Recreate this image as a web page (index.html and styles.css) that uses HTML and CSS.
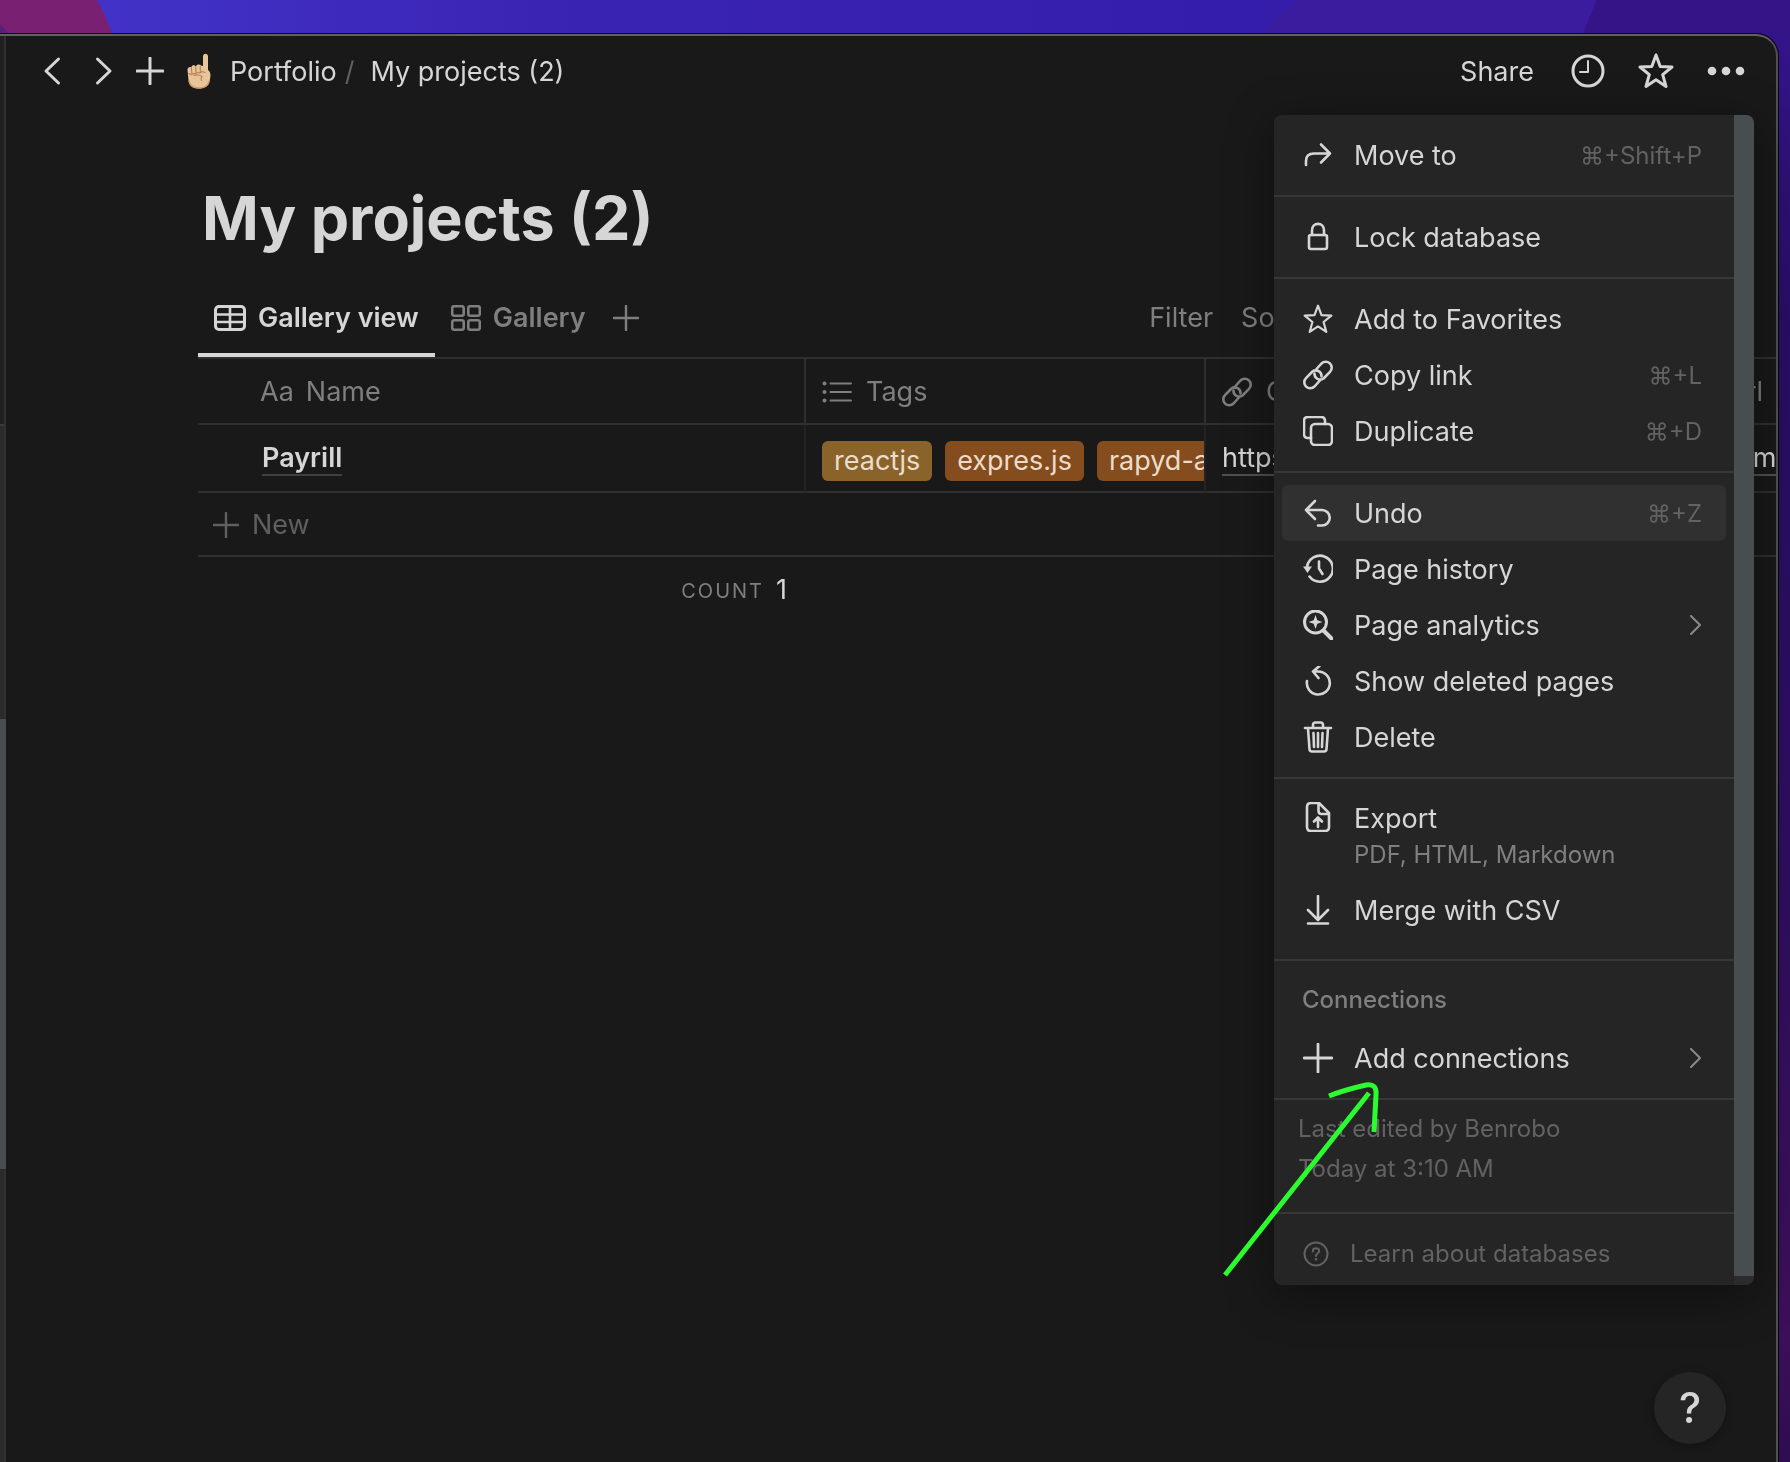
FILE: index.html
```html
<!DOCTYPE html>
<html lang="en">
<head>
<meta charset="utf-8">
<meta name="viewport" content="width=device-width, initial-scale=1">
<title>My projects (2)</title>
<link rel="stylesheet" href="styles.css">
</head>
<body>
<svg class="wallpaper" viewBox="0 0 1790 1462" preserveAspectRatio="none" aria-hidden="true">
  <defs>
    <linearGradient id="sky" x1="0" y1="0" x2="1" y2="0"><stop offset="0.05" stop-color="#4233c8"/><stop offset="0.3" stop-color="#3a24b4"/><stop offset="0.7" stop-color="#351dab"/><stop offset="1" stop-color="#34148a"/></linearGradient>
    <linearGradient id="side" x1="0" y1="0" x2="0" y2="1"><stop offset="0" stop-color="#34148a"/><stop offset="0.2" stop-color="#260e62"/><stop offset="0.6" stop-color="#2e0e5e"/><stop offset="0.9" stop-color="#3d0f5a"/><stop offset="1" stop-color="#2f0c52"/></linearGradient>
  </defs>
  <rect width="1790" height="40" fill="url(#sky)"/>
  <path d="M1298 0L1260 34H1584L1597 0Z" fill="#3a1c9e"/>
  <path d="M1597 0L1580 40H1790V0Z" fill="#341486"/>
  <path d="M0 0H97Q107 18 112 34H0Z" fill="#7a2072"/>
  <path d="M0 24L9 34H0Z" fill="#56207a"/>
  <rect x="1760" y="34" width="30" height="1428" fill="url(#side)"/>
</svg>

<svg class="sprite" aria-hidden="true">
  <symbol id="i-plus" viewBox="0 0 28 28"><path d="M14 1V27M1 14H27"/></symbol>
  <symbol id="i-chev" viewBox="0 0 12 20"><path d="M1 1L10 10L1 19"/></symbol>
  <symbol id="i-star" viewBox="0 0 36 36"><path d="M18 2L22.2 13.4L34 14L24.700 21.600L28 33.500L18 26.800L8 33.500L11.300 21.600L2 14L13.800 13.400Z"/></symbol>
  <symbol id="i-link" viewBox="0 0 30 30"><path d="M13.500 9L18.500 3.500A5.900 5.900 0 0 1 27 11.800L20.500 18.500A5.700 5.700 0 0 1 11.500 13.500"/><path d="M16.500 21L11.500 26.500A5.900 5.900 0 0 1 3 18.200L9.500 11.500A5.700 5.700 0 0 1 18.500 16.500"/></symbol>
</svg>

<div class="desktop">
  <div class="window">
    <aside class="sidebar-edge"><div class="sidebar-top"></div><div class="sidebar-thumb"></div></aside>
    <div class="page">
      <header class="topbar">
        <nav class="crumbs" aria-label="Breadcrumb">
          <button class="icon-btn back" aria-label="Back"><svg width="18" height="30" viewBox="0 0 18 30"><path d="M15.500 3L3 15L15.500 27"/></svg></button>
          <button class="icon-btn forward" aria-label="Forward"><svg width="18" height="30" viewBox="0 0 18 30"><path d="M2.500 3L15 15L2.500 27"/></svg></button>
          <button class="icon-btn add" aria-label="New tab"><svg width="28" height="28"><use href="#i-plus"/></svg></button>
          <a class="crumb first" href="#"><svg class="hand" width="26" height="36" viewBox="0 0 26 36" aria-hidden="true"><path d="M17 3.500C17 -.2 22 -.2 22 3.500L22 17C25 19 25 23 23.500 28C22 33.500 18 35.500 13 35.500C6 35.500 3.500 32 2.500 27L1.500 17C1.200 14.500 3.500 13.300 5.300 14.200C6 12 8.500 11.800 9.800 13.200C11 11 14 11 15 12.500L17 13Z" fill="#e9c49b"/><path d="M5.300 14.500L5.800 20M9.800 13.500L10 19M14.300 13V18M3 20.500Q5 22.500 7 20.500Q9 21.500 11 19.500Q14 20.500 16 18.500L19 19.500M8 22.500Q12 21 16 23.500Q14.500 25 15.500 27.500" stroke="#b98658" stroke-width="1.200"/><path d="M3 28C4 33 8 35 13 35C18 35 22 33 23.300 28" stroke="#d19a68" stroke-width="1.400"/></svg><span class="label">Portfolio</span></a>
          <span class="slash label">/</span>
          <a class="crumb" href="#"><span class="label">My projects (2)</span></a>
        </nav>
        <div class="actions">
          <button class="share"><span class="label">Share</span></button>
          <button class="icon-btn" aria-label="Updates"><svg width="34" height="34" viewBox="0 0 34 34"><circle cx="17" cy="17" r="15"/><path d="M17 7V18H9" stroke-width="2"/></svg></button>
          <button class="icon-btn" aria-label="Favorite"><svg width="36" height="36"><use href="#i-star"/></svg></button>
          <button class="icon-btn" aria-label="More"><svg class="solid" width="38" height="10" viewBox="0 0 38 10"><circle cx="5" cy="5" r="4.300"/><circle cx="19" cy="5" r="4.300"/><circle cx="33" cy="5" r="4.300"/></svg></button>
        </div>
      </header>

      <main class="content">
        <h1>My projects (2)</h1>
        <div class="views">
          <button class="tab active"><svg width="32" height="26" viewBox="0 0 32 26"><rect x="1.500" y="1.500" width="29" height="23" rx="3.500" stroke-width="3"/><path d="M2 9.500H30M2 17H30M16 2V24"/></svg>Gallery view</button>
          <button class="tab"><svg width="30" height="26" viewBox="0 0 30 26"><rect x="1.200" y="1.200" width="11.500" height="9.500" rx="2"/><rect x="17.300" y="1.200" width="11.500" height="9.500" rx="2"/><rect x="1.200" y="15.200" width="11.500" height="9.500" rx="2"/><rect x="17.300" y="15.200" width="11.500" height="9.500" rx="2"/></svg>Gallery</button>
          <button class="tab add-view" aria-label="Add view"><svg width="26" height="26"><use href="#i-plus"/></svg></button>
          <div class="tools"><button>Filter</button><button>Sort</button></div>
        </div>
        <table>
          <colgroup><col class="c-name"><col class="c-prop"><col class="c-prop"><col class="c-last"></colgroup>
          <thead><tr>
            <th scope="col"><span class="head name"><span class="aa">Aa</span>Name</span></th>
            <th scope="col"><span class="head"><svg width="30" height="24" viewBox="0 0 30 24"><path d="M8.500 3.500H29M8.500 12H29M8.500 20.500H29" stroke-width="2"/><g class="solid"><circle cx="2.500" cy="3.500" r="2"/><circle cx="2.500" cy="12" r="2"/><circle cx="2.500" cy="20.500" r="2"/></g></svg>Tags</span></th>
            <th scope="col"><span class="head"><svg width="30" height="30"><use href="#i-link"/></svg>Github</span></th>
            <th scope="col"><span class="head"><svg width="30" height="30"><use href="#i-link"/></svg>Live Url</span></th>
          </tr></thead>
          <tbody><tr>
            <td><a class="title-link" href="#">Payrill</a></td>
            <td><div class="tags"><span class="tag yellow">reactjs</span><span class="tag orange">expres.js</span><span class="tag orange">rapyd-api</span></div></td>
            <td><a class="url" href="#">https://github.com</a></td>
            <td><a class="url" href="#">https://teammate.com</a></td>
          </tr></tbody>
        </table>
        <button class="new-row"><svg width="26" height="26"><use href="#i-plus"/></svg>New</button>
        <div class="count"><span class="count-label">COUNT</span><span>1</span></div>
      </main>
    </div>

    <div class="menu">
      <div class="menu-body">
        <div class="group">
          <button class="item"><svg width="30" height="30" viewBox="0 0 30 30"><path d="M3 25V21C3 16 6 13.500 11 13.500H27M18 4.500L27 13.500L18 22.500"/></svg><span>Move to</span><kbd>⌘+Shift+P</kbd></button>
        </div>
        <div class="group">
          <button class="item"><svg width="30" height="30" viewBox="0 0 30 30"><rect x="6" y="13" width="18" height="14" rx="2"/><path d="M9 13V8.500C9 -.3 21 -.3 21 8.500V13"/></svg><span>Lock database</span></button>
        </div>
        <div class="group">
          <button class="item"><svg width="30" height="30"><use href="#i-star"/></svg><span>Add to Favorites</span></button>
          <button class="item"><svg width="30" height="30"><use href="#i-link"/></svg><span>Copy link</span><kbd>⌘+L</kbd></button>
          <button class="item"><svg width="30" height="30" viewBox="0 0 30 30"><rect x="8" y="8" width="21" height="21" rx="4"/><path d="M8 22H5Q1 22 1 18V5Q1 1 5 1H18Q22 1 22 5V8"/></svg><span>Duplicate</span><kbd>⌘+D</kbd></button>
        </div>
        <div class="group">
          <button class="item hover"><svg width="30" height="30" viewBox="0 0 30 30"><path d="M12 3L3 12L12 21M3 12H19A7.500 7.500 0 0 1 19 27.500H15"/></svg><span>Undo</span><kbd>⌘+Z</kbd></button>
          <button class="item"><svg width="30" height="30" viewBox="0 0 30 30"><path d="M4 13A13 13 0 1 1 6.500 22.500M16 7.500V14.500L19.500 20"/><path class="solid" d="M0 12.500H9L4.500 19Z"/></svg><span>Page history</span></button>
          <button class="item"><svg width="30" height="30" viewBox="0 0 30 30"><circle cx="12.500" cy="12" r="11" stroke-width="3"/><path d="M20.500 20.500L28.500 28.500" stroke-width="4"/><path class="solid" d="M12.500 5L14.300 10.200L19.500 12L14.300 13.800L12.500 19L10.700 13.800L5.500 12L10.700 10.200Z"/></svg><span>Page analytics</span><svg class="chev" width="12" height="20"><use href="#i-chev"/></svg></button>
          <button class="item"><svg width="30" height="30" viewBox="0 0 30 30"><path d="M4 15A11.500 11.500 0 1 0 15 5.500H11M16.500 0L10 5.500L15.500 12"/></svg><span>Show deleted pages</span></button>
          <button class="item"><svg width="30" height="32" viewBox="0 0 30 32"><path d="M2 7H28M5 7.500L6.500 28Q6.600 30.500 9 30.500H21Q23.400 30.500 23.500 28L25 7.500M10 6.500V4Q10 1.500 12.500 1.500H17.500Q20 1.500 20 4V6.500M10.500 12L11 26M15 12V26M19.500 12L19 26"/></svg><span>Delete</span></button>
        </div>
        <div class="group files">
          <button class="item tall"><svg width="30" height="30" viewBox="0 0 30 30"><path d="M8 1H16L26 11V25Q26 29 22 29H8Q4 29 4 25V5Q4 1 8 1ZM15.500 1.500V9Q15.500 12 18.500 12H25.500M15 25V16M11 19.500L15 15.500L19 19.500"/></svg><span>Export<small>PDF, HTML, Markdown</small></span></button>
          <button class="item"><svg width="30" height="30" viewBox="0 0 30 30"><path d="M15 1V24M5 15L15 25L25 15M5 28.500H25"/></svg><span>Merge with CSV</span></button>
        </div>
        <div class="group">
          <h2>Connections</h2>
          <button class="item"><svg width="30" height="30"><use href="#i-plus"/></svg><span>Add connections</span><svg class="chev" width="12" height="20"><use href="#i-chev"/></svg></button>
        </div>
        <div class="meta"><p>Last edited by Benrobo</p><p>Today at 3:10 AM</p></div>
        <a class="learn" href="#"><svg width="26" height="26" viewBox="0 0 26 26"><circle cx="13" cy="13" r="11.500" stroke-width="2"/><path d="M9.800 10.500C9.800 6 16.200 6.300 16.200 10C16.200 12.200 13 12.500 13 15" stroke-width="2"/><circle class="solid" cx="13" cy="18.300" r="1.300"/></svg>Learn about databases</a>
      </div>
      <div class="scroll"><div class="scroll-thumb"></div></div>
    </div>

    <svg class="arrow" width="160" height="200" viewBox="0 0 160 200" aria-hidden="true"><path d="M6 195L150 13M110 16Q125 10 147 5Q158 3 157 15L155 52"/></svg>
    <button class="help">?</button>
  </div>
</div>
</body>
</html>
```
FILE: styles.css
```css
* { box-sizing: border-box; }
body {
  margin: 0;
  background: #2b0e5e;
  color: #d6d6d6;
  font: 27px/36px Inter, "Liberation Sans", sans-serif;
}
button, a, kbd, small { font: inherit; color: inherit; }
button { background: none; border: 0; padding: 0; text-align: left; cursor: pointer; }
a { text-decoration: none; }
h1, h2, p { margin: 0; }
svg { flex: none; display: block; fill: none; stroke: currentColor; stroke-width: 2.6px; stroke-linecap: round; stroke-linejoin: round; }
.solid { fill: currentColor; stroke: none; }
.sprite { position: absolute; width: 0; height: 0; }
.wallpaper { position: fixed; inset: 0; width: 100%; height: 100%; stroke: none; }

.desktop { position: relative; display: flex; min-height: 100vh; padding: 34px 12px 0 0; }
.window {
  position: relative;
  flex: 1;
  min-width: 0;
  display: flex;
  background: #191919;
  border-top: 2px solid #626066;
  border-right: 2px solid #505052;
  border-top-right-radius: 22px;
  box-shadow: 0 0 0 1px #050308;
}
.sidebar-edge { width: 6px; flex: none; background: #2b2b2b; border-right: 2px solid #303030; }
.sidebar-top { height: 390px; background: #202020; border-bottom: 2px solid #3a3a3a; }
.sidebar-thumb { width: 6px; height: 450px; margin-top: 293px; background: #484d50; }
.page { flex: 1; min-width: 0; }

.topbar { display: flex; align-items: center; justify-content: space-between; height: 70px; padding: 0 31px 0 37px; }
.crumbs, .actions, .crumb { display: flex; align-items: center; }
.topbar svg { stroke-width: 3px; }
.topbar .hand { stroke: none; }
.label, .item span { padding-top: 2px; }
.share .label { display: block; }
.forward { margin-left: 34px; }
.add { margin-left: 23px; }
.crumb.first { margin-left: 22px; gap: 18px; }
.slash { color: #5f5f5f; margin: 0 16px 0 8px; }
.actions { gap: 33px; }
.share { margin-right: 4px; }

.content { padding: 74px 0 0 192px; }
h1 { font-size: 61px; line-height: 76px; font-weight: 700; padding-left: 4px; }
.views { display: flex; height: 80px; margin-top: 23px; border-bottom: 2px solid #2f2f2f; }
.tab { display: flex; align-items: center; gap: 12px; padding: 4px 16px 0; color: #7f7f7f; font-weight: 600; border-bottom: 4px solid transparent; }
.tab.active { color: #d6d6d6; border-color: #d6d6d6; }
.add-view { padding-left: 11px; }
.tools { display: flex; gap: 28px; margin-left: auto; padding-right: 482px; color: #7f7f7f; }

table { width: 100%; table-layout: fixed; border-spacing: 0; }
.c-name { width: 608px; }
.c-prop { width: 400px; }
th, td { padding: 0 16px; border-right: 2px solid #2f2f2f; border-bottom: 2px solid #2f2f2f; font-weight: 400; text-align: left; overflow: hidden; white-space: nowrap; }
td { border-right-color: #232323; height: 68px; }
th { height: 66px; padding-top: 2px; color: #7f7f7f; }
th:last-child, td:last-child { border-right: 0; }
td:nth-child(2), td:last-child { padding-right: 0; }
.head { display: flex; align-items: center; gap: 14px; }
.head.name { padding-left: 46px; gap: 12px; }
.title-link { margin-left: 48px; font-weight: 600; border-bottom: 2px solid #404040; }
.url { border-bottom: 2px solid #505050; }
.tags { display: flex; gap: 13px; padding-top: 6px; }
.tag { flex: none; padding: 2px 12px; border-radius: 6px; color: #ecdccb; }
.yellow { background: #89632a; }
.orange { background: #854c1d; }
.new-row { display: flex; align-items: center; gap: 13px; width: 100%; height: 64px; padding: 2px 0 0 15px; color: #5f5f5f; border-bottom: 2px solid #2f2f2f; }
.count { display: flex; justify-content: flex-end; align-items: center; gap: 12px; width: 589px; height: 66px; }
.count-label { font-size: 20px; letter-spacing: 2px; color: #7f7f7f; padding-top: 2px; }

.menu {
  position: absolute;
  top: 79px;
  right: 22px;
  width: 480px;
  display: flex;
  overflow: hidden;
  border-radius: 8px;
  background: #252525;
  box-shadow: 0 10px 48px rgba(0, 0, 0, .4);
}
.menu-body { flex: 1; }
.group { padding: 12px 8px; border-bottom: 2px solid #373737; }
.group.files { padding-bottom: 21px; }
.item { display: flex; align-items: center; gap: 21px; width: 100%; height: 56px; padding: 0 24px 0 21px; border-radius: 6px; }
.item.hover { background: #303030; }
.item span { flex: 1; white-space: nowrap; }
.item kbd { color: #626262; font-size: 24px; padding-top: 2px; }
.item.tall { height: 91px; align-items: flex-start; padding-top: 8px; }
.item.tall svg { margin-top: 3px; }
.item small { display: block; font-size: 24px; color: #7f7f7f; }
.item .chev { color: #8a8a8a; stroke-width: 2px; }
h2 { font-size: 24px; line-height: 36px; font-weight: 500; color: #7f7f7f; padding: 9px 20px 12px; }
.meta { padding: 9px 24px 23px; font-size: 24px; line-height: 40px; color: #626262; border-bottom: 2px solid #373737; }
.learn { display: flex; align-items: center; gap: 21px; height: 71px; padding: 9px 29px 0; font-size: 24px; color: #626262; white-space: nowrap; }
.scroll { width: 20px; background: #2b2b2b; padding-bottom: 9px; }
.scroll-thumb { height: 100%; background: #484d50; }

.arrow { position: absolute; right: 397px; top: 1044px; stroke: #2bfb2f; stroke-width: 5px; stroke-linecap: butt; }
.help { position: absolute; right: 50px; bottom: 18px; width: 72px; height: 72px; border-radius: 50%; background: #252525; font-size: 42px; font-weight: 500; text-align: center; box-shadow: 0 2px 8px rgba(0, 0, 0, .3); }
```
